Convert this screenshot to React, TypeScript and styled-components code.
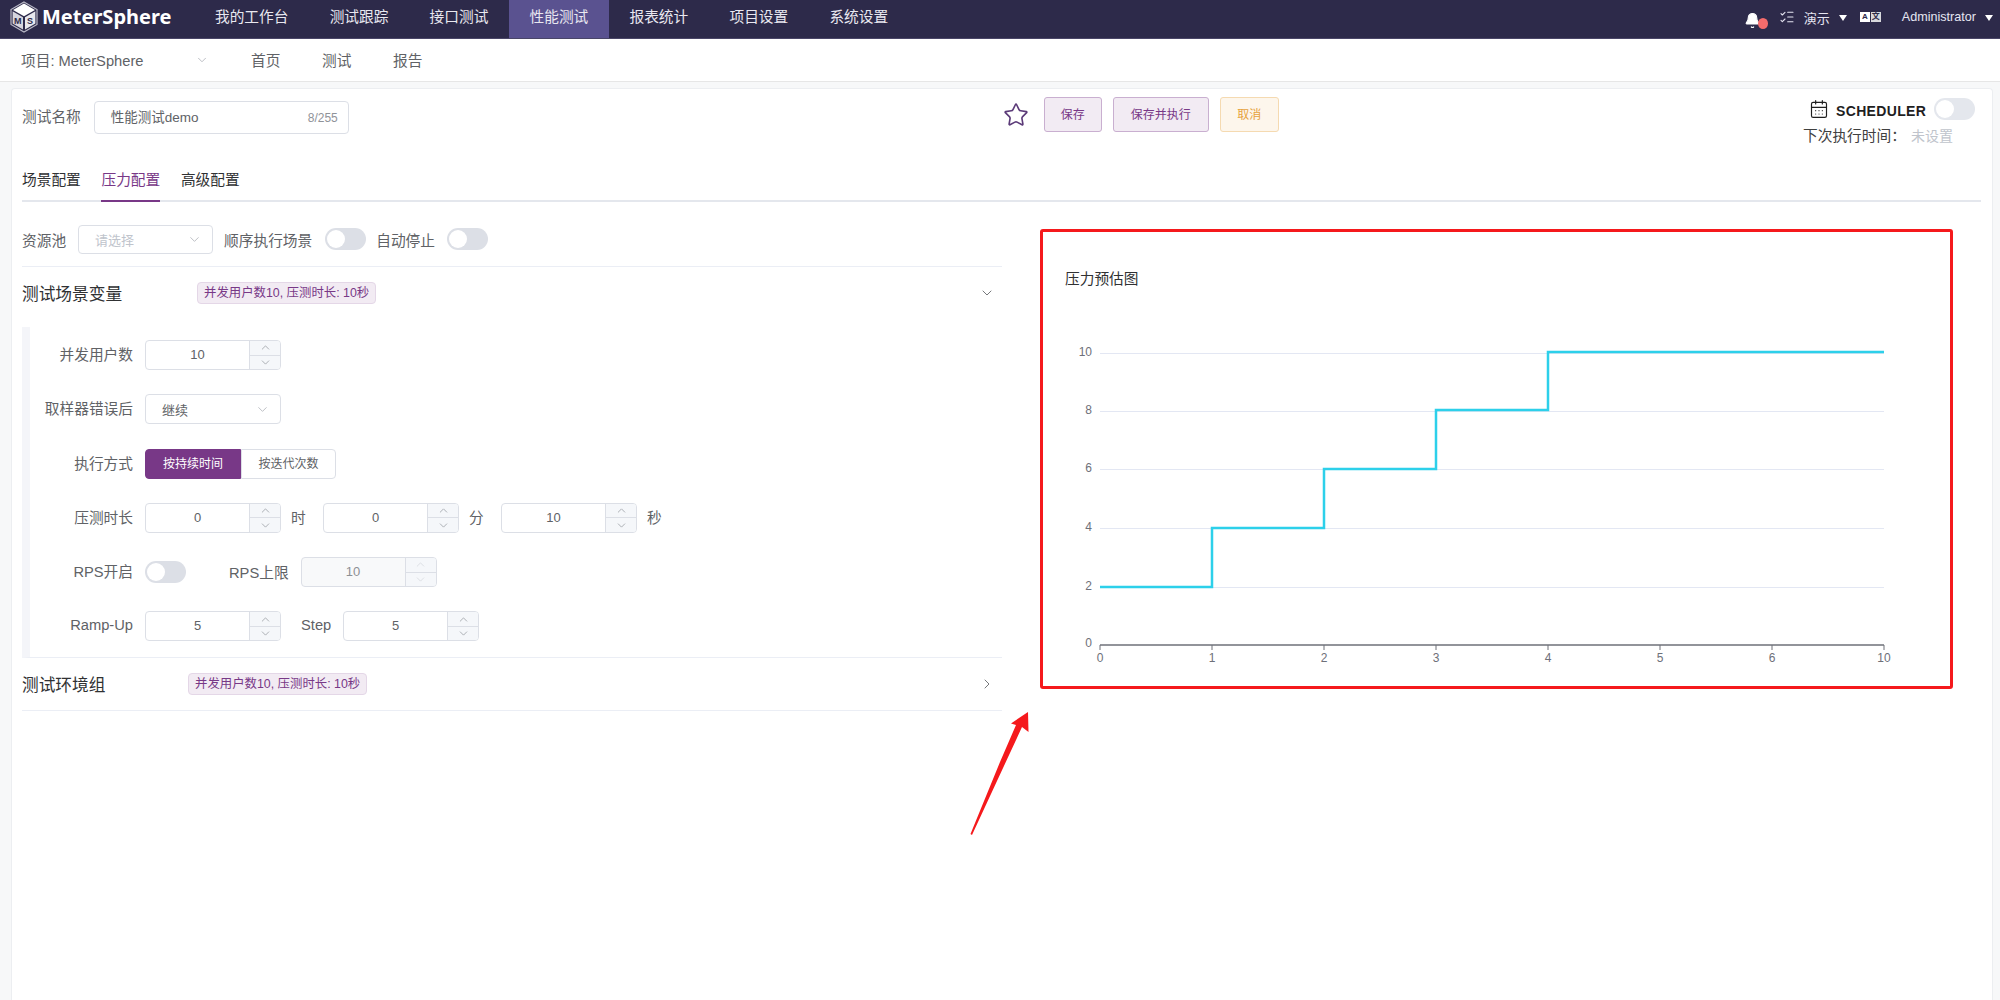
import React from "react";
import styled, { createGlobalStyle } from "styled-components";
import { Bell, CalendarDays, ChevronDown, ChevronRight, ChevronUp, ListChecks, Star } from "lucide-react";

const Global = createGlobalStyle`
  html, body { margin: 0; height: 100%; overflow: hidden; background: #f7f8f9; }
  body { font-family: "Liberation Sans", "Noto Sans CJK SC", sans-serif; font-size: 14.7px; color: #606266; }
  * { box-sizing: border-box; }
`;

const Page = styled.div`
  display: flex;
  flex-direction: column;
  height: 1000px;
  overflow: hidden;
`;
const TopBar = styled.header`
  display: flex;
  align-items: flex-start;
  flex: none;
  height: 39px;
  background: #2d2a4a;
  border-bottom: 1px solid #4a4668;
  color: #fff;
`;
const Brand = styled.div`
  display: flex;
  align-items: center;
  gap: 3px;
  width: 194.4px;
  height: 38px;
  padding: 0 0 4px 9px;
`;
const BrandName = styled.span`
  font-family: "Noto Sans", sans-serif;
  font-size: 20px;
  font-weight: 700;
  line-height: 30px;
`;
const NavItem = styled.div<{ $active?: boolean }>`
  height: 38px;
  padding: 0 20.6px;
  line-height: 34px;
  font-size: 14.7px;
  color: #e9e8f0;
  background: ${(p) => (p.$active ? "#5a5290" : "transparent")};
`;
const TopRight = styled.div`
  display: flex;
  align-items: center;
  height: 34px;
  margin-left: auto;
  padding-right: 7px;
`;
const BellWrap = styled.span`
  position: relative;
  display: flex;
  width: 17px;
  margin-right: 18px;
  top: 3px;
  &::after {
    content: "";
    position: absolute;
    left: 14px;
    top: 6px;
    width: 10px;
    height: 11px;
    border-radius: 50%;
    background: #f56c6c;
  }
`;
const TopText = styled.span<{ $size: number; $left: number }>`
  margin-left: ${(p) => p.$left}px;
  font-size: ${(p) => p.$size}px;
  color: #e6e6f2;
  white-space: nowrap;
`;
const Caret = styled.span<{ $left: number; $right: number }>`
  width: 0;
  height: 0;
  margin: 2px ${(p) => p.$right}px 0 ${(p) => p.$left}px;
  border-left: 4.5px solid transparent;
  border-right: 4.5px solid transparent;
  border-top: 6px solid #fff;
`;
const Lang = styled.span`
  display: flex;
  gap: 1px;
`;
const LangCell = styled.span<{ $dim?: boolean }>`
  width: 10px;
  height: 10px;
  background: ${(p) => (p.$dim ? "#d8d8dc" : "#fff")};
  color: #2d2a4a;
  font-size: 8px;
  font-weight: 700;
  line-height: 10px;
  text-align: center;
`;

const SubNav = styled.nav`
  display: flex;
  align-items: center;
  flex: none;
  height: 43px;
  background: #fff;
  border-bottom: 1px solid #e6e6e6;
  padding: 0 0 0 21px;
`;
const ProjectName = styled.span`
  width: 174px;
  padding-bottom: 2px;
  color: #606266;
`;
const SubChevron = styled.span`
  display: flex;
  width: 56px;
  color: #a8abb2;
`;
const SubItem = styled.span`
  width: 71px;
  padding-bottom: 2px;
`;

const Card = styled.main`
  position: relative;
  flex: 1;
  margin: 6px 7px 0 11px;
  background: #fff;
  border: 1px solid #eceef1;
  border-bottom: none;
  border-radius: 4px 4px 0 0;
  padding: 0 11px 0 10px;
`;
const TitleRow = styled.div`
  display: flex;
  align-items: flex-start;
  height: 76px;
  padding-top: 8px;
`;
const NameGroup = styled.div`
  display: flex;
  align-items: center;
  gap: 13px;
  margin-top: 4px;
`;
const FieldLabel = styled.label`
  padding-bottom: 5px;
  color: #606266;
  white-space: nowrap;
`;
const NameInput = styled.div`
  display: flex;
  align-items: center;
  justify-content: space-between;
  width: 255px;
  height: 33px;
  padding: 0 10px 0 16px;
  border: 1px solid #dcdfe6;
  border-radius: 4px;
  font-size: 13.5px;
`;
const NameValue = styled.span`
  padding-bottom: 4px;
`;
const Counter = styled.span`
  font-size: 12px;
  color: #909399;
`;
const Actions = styled.div`
  display: flex;
  align-items: center;
  margin-left: 654px;
  height: 35px;
`;
const StarIcon = styled(Star)`
  margin-right: 15px;
  color: #5b3a78;
`;
const ActionButton = styled.button<{ $tone: "primary" | "warn"; $width: number }>`
  width: ${(p) => p.$width}px;
  height: 35px;
  margin-right: 11px;
  padding: 0 0 2px;
  border-radius: 3px;
  font: inherit;
  font-size: 12px;
  border: 1px solid ${(p) => (p.$tone === "warn" ? "#f5dab1" : "#c9afd0")};
  background: ${(p) => (p.$tone === "warn" ? "#fdf6ec" : "#f2ebf3")};
  color: ${(p) => (p.$tone === "warn" ? "#e6a23c" : "#783887")};
`;
const Scheduler = styled.div`
  margin-left: auto;
  width: 178px;
`;
const SchedulerTop = styled.div`
  display: flex;
  align-items: center;
  height: 24px;
  padding-left: 6px;
  color: #1f1f1f;
`;
const SchedulerName = styled.strong`
  width: 98px;
  margin: 4px 0 0 7px;
  font-size: 14px;
  letter-spacing: 0.35px;
`;
const NextRun = styled.div`
  margin-top: 5px;
  display: flex;
  justify-content: space-between;
  padding-right: 28px;
  color: #404040;
  line-height: 20px;
`;
const Muted = styled.span`
  color: #c0c4cc;
  font-size: 14px;
`;

const TabBar = styled.div`
  display: flex;
  gap: 20.7px;
  box-shadow: inset 0 -2px 0 #e4e7ed;
`;
const Tab = styled.div<{ $active?: boolean }>`
  height: 37px;
  line-height: 30px;
  border-bottom: 2px solid ${(p) => (p.$active ? "#783887" : "transparent")};
  color: ${(p) => (p.$active ? "#783887" : "#303133")};
`;

const Columns = styled.div`
  display: grid;
  grid-template-columns: 980px 913px;
  column-gap: 38px;
`;
const LeftColumn = styled.section``;
const Toolbar = styled.div`
  display: flex;
  align-items: center;
  height: 65px;
  padding-top: 23px;
  padding-bottom: 13px;
  border-bottom: 1px solid #ebeef5;
`;
const ToolLabel = styled.span<{ $left?: number; $right: number }>`
  margin-left: ${(p) => p.$left ?? 0}px;
  margin-right: ${(p) => p.$right}px;
  white-space: nowrap;
`;
const SelectBox = styled.div<{ $width: number; $height: number; $muted?: boolean }>`
  display: flex;
  align-items: center;
  justify-content: space-between;
  flex: none;
  width: ${(p) => p.$width}px;
  height: ${(p) => p.$height}px;
  padding: 0 10px 0 16px;
  border: 1px solid #dcdfe6;
  border-radius: 4px;
  font-size: 13px;
  color: ${(p) => (p.$muted ? "#c0c4cc" : "#606266")};
  svg { color: #a8abb2; }
`;
const Toggle = styled.span<{ $light?: boolean }>`
  position: relative;
  display: inline-block;
  flex: none;
  width: 41px;
  height: 22px;
  border-radius: 11px;
  background: ${(p) => (p.$light ? "#e4e7ed" : "#dcdfe6")};
  &::after {
    content: "";
    position: absolute;
    left: 2px;
    top: 2px;
    width: 18px;
    height: 18px;
    border-radius: 50%;
    background: #fff;
  }
`;
const SectionHeader = styled.div<{ $height: number; $border?: boolean }>`
  display: flex;
  align-items: center;
  height: ${(p) => p.$height}px;
  padding-bottom: ${(p) => p.$height - 52}px;
  border-bottom: ${(p) => (p.$border ? "1px solid #ebeef5" : "none")};
  color: #606266;
`;
const SectionTitle = styled.h3<{ $width: number }>`
  margin: 0;
  width: ${(p) => p.$width}px;
  font-size: 16.7px;
  font-weight: 400;
  color: #303133;
`;
const SummaryTag = styled.span`
  height: 22px;
  line-height: 20px;
  padding: 0 6px;
  border: 1px solid #e4d7e7;
  border-radius: 4px;
  background: #f2ebf3;
  color: #783887;
  font-size: 12.4px;
  white-space: nowrap;
`;
const HeaderChevron = styled.span`
  display: flex;
  margin-left: auto;
  padding-right: 7px;
`;
const SectionBody = styled.div`
  display: flex;
  flex-direction: column;
  gap: 24.3px;
  padding: 13px 0 16px;
  border-left: 8px solid #f4f5f9;
  border-bottom: 1px solid #ebeef5;
`;
const FormRow = styled.div`
  display: flex;
  align-items: center;
  height: 30px;
`;
const FormLabel = styled.span`
  flex: none;
  width: 103px;
  margin-right: 12px;
  padding-bottom: 3px;
  text-align: right;
  white-space: nowrap;
`;
const NumberBox = styled.div<{ $disabled?: boolean }>`
  display: flex;
  flex: none;
  width: 136px;
  height: 30px;
  border: 1px solid #dcdfe6;
  border-radius: 4px;
  background: ${(p) => (p.$disabled ? "#f8f9fa" : "#fff")};
  overflow: hidden;
  font-size: 13px;
  color: ${(p) => (p.$disabled ? "#8d9095" : "#606266")};
`;
const NumberValue = styled.span`
  flex: 1;
  line-height: 28px;
  text-align: center;
`;
const Spinner = styled.span`
  display: flex;
  flex-direction: column;
  width: 31px;
  background: #f5f7fa;
  border-left: 1px solid #dcdfe6;
`;
const SpinButton = styled.span<{ $disabled?: boolean }>`
  display: flex;
  flex: 1;
  align-items: center;
  justify-content: center;
  color: ${(p) => (p.$disabled ? "#d3d6dc" : "#8f9399")};
  & + & { border-top: 1px solid #dcdfe6; }
`;
const Segmented = styled.div`
  display: flex;
`;
const Segment = styled.span<{ $active?: boolean }>`
  width: ${(p) => (p.$active ? 96 : 95)}px;
  height: 30px;
  line-height: 28px;
  text-align: center;
  font-size: 12px;
  border: 1px solid ${(p) => (p.$active ? "#783887" : "#dcdfe6")};
  border-radius: ${(p) => (p.$active ? "4px 0 0 4px" : "0 4px 4px 0")};
  background: ${(p) => (p.$active ? "#783887" : "#fff")};
  color: ${(p) => (p.$active ? "#fff" : "#606266")};
`;
const Unit = styled.span`
  flex: none;
  width: 15px;
  margin: 0 17px 0 10px;
  padding-bottom: 3px;
`;
const InlineLabel = styled.span<{ $left: number; $right: number }>`
  flex: none;
  margin: 0 ${(p) => p.$right}px 0 ${(p) => p.$left}px;
  padding-bottom: 2px;
`;

const ChartPanel = styled.section`
  height: 460px;
  margin-top: 27px;
  border: 3px solid #f5191c;
  border-radius: 3px;
`;
const ChartTitle = styled.div`
  padding: 37px 0 0 22px;
  height: 57px;
  line-height: 20px;
  color: #303133;
`;
const ChartSvg = styled.svg`
  display: block;
  margin-left: 1px;
  font-family: "Liberation Sans", sans-serif;
`;
const ArrowMark = styled.svg`
  position: absolute;
  left: 948px;
  top: 611px;
`;

function NumberField({ value, disabled }: { value: number; disabled?: boolean }) {
  return (
    <NumberBox $disabled={disabled}>
      <NumberValue>{value}</NumberValue>
      <Spinner>
        <SpinButton $disabled={disabled}><ChevronUp size={13} strokeWidth={1.3} /></SpinButton>
        <SpinButton $disabled={disabled}><ChevronDown size={13} strokeWidth={1.3} /></SpinButton>
      </Spinner>
    </NumberBox>
  );
}

function Logo() {
  return (
    <svg width="30" height="32" viewBox="0 0 30 32">
      <path d="M15 1 28 8.5V23.5L15 31 2 23.5V8.5Z" fill="none" stroke="#b9b8c6" strokeWidth="1.2" />
      <path d="M15 2.5 26 9 15 15.2 4 9Z" fill="#fff" />
      <path d="M3.6 10.2 14 16.2V28.6L3.6 22.6Z" fill="#d6d5de" />
      <path d="M26.4 10.2 16 16.2V28.6L26.4 22.6Z" fill="#e8e8ee" />
      <text x="5" y="23" fontSize="9" fontWeight="700" fill="#2d2a4a" fontFamily="Liberation Sans">M</text>
      <text x="18" y="23" fontSize="9" fontWeight="700" fill="#2d2a4a" fontFamily="Liberation Sans">S</text>
    </svg>
  );
}

const gridLines = [
  { y: 64, label: "10" },
  { y: 122, label: "8" },
  { y: 180, label: "6" },
  { y: 239, label: "4" },
  { y: 298, label: "2" },
];
const xTicks = ["0", "1", "2", "3", "4", "5", "6", "10"];

function PressureChart() {
  return (
    <ChartSvg width="905" height="396" viewBox="0 0 905 396">
      {gridLines.map((g) => (
        <g key={g.label}>
          <line x1="56" x2="840" y1={g.y + 0.5} y2={g.y + 0.5} stroke="#e3e7f3" />
          <text x="48" y={g.y + 3} textAnchor="end" fontSize="12" fill="#6e7079">{g.label}</text>
        </g>
      ))}
      <text x="48" y="358" textAnchor="end" fontSize="12" fill="#6e7079">0</text>
      <line x1="56" x2="840" y1="356" y2="356" stroke="#6e7079" strokeWidth="1.5" />
      {xTicks.map((t, i) => (
        <g key={t}>
          <line x1={56 + i * 112} x2={56 + i * 112} y1="356" y2="361" stroke="#6e7079" />
          <text x={56 + i * 112} y="373" textAnchor="middle" fontSize="12" fill="#6e7079">{t}</text>
        </g>
      ))}
      <path
        d="M56 298H168V239H280V180H392V121H504V63H840"
        fill="none"
        stroke="#2dd0ea"
        strokeWidth="2.5"
      />
    </ChartSvg>
  );
}

const navItems = ["测试跟踪", "接口测试", "性能测试", "报表统计", "项目设置", "系统设置"];

export default function App() {
  return (
    <Page>
      <Global />
      <TopBar>
        <Brand>
          <Logo />
          <BrandName>MeterSphere</BrandName>
        </Brand>
        <NavItem>我的工作台</NavItem>
        {navItems.map((n) => (
          <NavItem key={n} $active={n === "性能测试"}>{n}</NavItem>
        ))}
        <TopRight>
          <BellWrap><Bell size={17} fill="#fff" strokeWidth={1.5} /></BellWrap>
          <ListChecks size={16} strokeWidth={1.6} color="#e6e6f2" />
          <TopText $size={13} $left={9}>演示</TopText>
          <Caret $left={9} $right={13} />
          <Lang><LangCell>A</LangCell><LangCell $dim>文</LangCell></Lang>
          <TopText $size={12.6} $left={21}>Administrator</TopText>
          <Caret $left={9} $right={0} />
        </TopRight>
      </TopBar>
      <SubNav>
        <ProjectName>项目: MeterSphere</ProjectName>
        <SubChevron><ChevronDown size={14} strokeWidth={1.3} /></SubChevron>
        <SubItem>首页</SubItem>
        <SubItem>测试</SubItem>
        <SubItem>报告</SubItem>
      </SubNav>
      <Card>
        <TitleRow>
          <NameGroup>
            <FieldLabel>测试名称</FieldLabel>
            <NameInput>
              <NameValue>性能测试demo</NameValue>
              <Counter>8/255</Counter>
            </NameInput>
          </NameGroup>
          <Actions>
            <StarIcon size={26} strokeWidth={1.5} />
            <ActionButton $tone="primary" $width={58}>保存</ActionButton>
            <ActionButton $tone="primary" $width={96}>保存并执行</ActionButton>
            <ActionButton $tone="warn" $width={59}>取消</ActionButton>
          </Actions>
          <Scheduler>
            <SchedulerTop>
              <CalendarDays size={20} strokeWidth={1.4} />
              <SchedulerName>SCHEDULER</SchedulerName>
              <Toggle $light />
            </SchedulerTop>
            <NextRun>
              <span>下次执行时间：</span>
              <Muted>未设置</Muted>
            </NextRun>
          </Scheduler>
        </TitleRow>
        <TabBar>
          <Tab>场景配置</Tab>
          <Tab $active>压力配置</Tab>
          <Tab>高级配置</Tab>
        </TabBar>
        <Columns>
          <LeftColumn>
            <Toolbar>
              <ToolLabel $right={12}>资源池</ToolLabel>
              <SelectBox $width={135} $height={29} $muted>
                <span>请选择</span>
                <ChevronDown size={15} strokeWidth={1.2} />
              </SelectBox>
              <ToolLabel $left={11} $right={13}>顺序执行场景</ToolLabel>
              <Toggle />
              <ToolLabel $left={10} $right={12}>自动停止</ToolLabel>
              <Toggle />
            </Toolbar>
            <SectionHeader $height={60}>
              <SectionTitle $width={175}>测试场景变量</SectionTitle>
              <SummaryTag>并发用户数10, 压测时长: 10秒</SummaryTag>
              <HeaderChevron><ChevronDown size={16} strokeWidth={1.3} /></HeaderChevron>
            </SectionHeader>
            <SectionBody>
              <FormRow>
                <FormLabel>并发用户数</FormLabel>
                <NumberField value={10} />
              </FormRow>
              <FormRow>
                <FormLabel>取样器错误后</FormLabel>
                <SelectBox $width={136} $height={30}>
                  <span>继续</span>
                  <ChevronDown size={15} strokeWidth={1.2} />
                </SelectBox>
              </FormRow>
              <FormRow>
                <FormLabel>执行方式</FormLabel>
                <Segmented>
                  <Segment $active>按持续时间</Segment>
                  <Segment>按迭代次数</Segment>
                </Segmented>
              </FormRow>
              <FormRow>
                <FormLabel>压测时长</FormLabel>
                <NumberField value={0} />
                <Unit>时</Unit>
                <NumberField value={0} />
                <Unit>分</Unit>
                <NumberField value={10} />
                <Unit>秒</Unit>
              </FormRow>
              <FormRow>
                <FormLabel>RPS开启</FormLabel>
                <Toggle />
                <InlineLabel $left={43} $right={12}>RPS上限</InlineLabel>
                <NumberField value={10} disabled />
              </FormRow>
              <FormRow>
                <FormLabel>Ramp-Up</FormLabel>
                <NumberField value={5} />
                <InlineLabel $left={20} $right={12}>Step</InlineLabel>
                <NumberField value={5} />
              </FormRow>
            </SectionBody>
            <SectionHeader $height={53} $border>
              <SectionTitle $width={166}>测试环境组</SectionTitle>
              <SummaryTag>并发用户数10, 压测时长: 10秒</SummaryTag>
              <HeaderChevron><ChevronRight size={16} strokeWidth={1.3} /></HeaderChevron>
            </SectionHeader>
          </LeftColumn>
          <ChartPanel>
            <ChartTitle>压力预估图</ChartTitle>
            <PressureChart />
          </ChartPanel>
        </Columns>
        <ArrowMark width="80" height="145" viewBox="0 0 80 145">
          <path d="M68 12 68.5 32 62 27 12 135 10.5 134 40 62 56 25 51 23.5Z" fill="#f5191c" />
        </ArrowMark>
      </Card>
    </Page>
  );
}
